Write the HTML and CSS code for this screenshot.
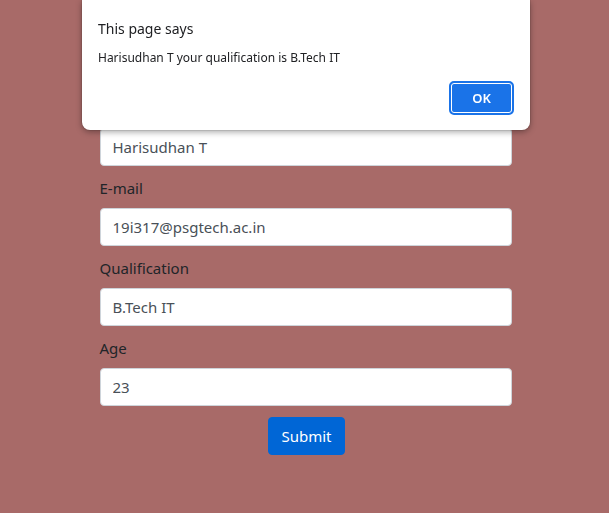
FILE: index.html
```html
<!DOCTYPE html>
<html lang="en">
<head>
<meta charset="utf-8">
<title>Form</title>
<link rel="stylesheet" href="styles.css">
</head>
<body>
<form class="form">
  <div class="field">
    <label class="label" for="name">Name</label>
    <input class="input" id="name" type="text" value="Harisudhan T">
  </div>
  <div class="field">
    <label class="label" for="email">E-mail</label>
    <input class="input" id="email" type="text" value="19i317@psgtech.ac.in">
  </div>
  <div class="field">
    <label class="label" for="qual">Qualification</label>
    <input class="input" id="qual" type="text" value="B.Tech IT">
  </div>
  <div class="field">
    <label class="label" for="age">Age</label>
    <input class="input" id="age" type="text" value="23">
  </div>
  <div class="actions">
    <button class="submit" type="button">Submit</button>
  </div>
</form>

<div class="dialog" role="alertdialog">
  <div class="dialog-title">This page says</div>
  <div class="dialog-msg">Harisudhan T your qualification is B.Tech IT</div>
  <div class="dialog-actions">
    <button class="ok" type="button">OK</button>
  </div>
</div>
</body>
</html>
```

FILE: styles.css
```css
html, body {
  margin: 0;
  padding: 0;
}
body {
  background: #a86a68;
  font-family: "Noto Sans", "Open Sans", sans-serif;
  color: #212529;
  width: 609px;
  height: 513px;
  overflow: hidden;
}
.form {
  width: 412px;
  margin: 0 auto;
  padding-top: 96px;
  transform: translateX(1px);
}
.field {
  display: flex;
  flex-direction: column;
  margin-bottom: 10px;
}
.label {
  font-size: 15px;
  line-height: 24px;
  margin-bottom: 8px;
}
.input {
  box-sizing: border-box;
  height: 38px;
  width: 100%;
  padding: 6px 12px;
  border: 1px solid #ced4da;
  border-radius: 4px;
  background: #fff;
  font-family: inherit;
  font-size: 15px;
  color: #495057;
  outline: none;
}
.actions {
  display: flex;
  justify-content: center;
  padding-top: 1px;
}
.submit {
  box-sizing: border-box;
  height: 38px;
  padding: 0 12px;
  border: 1px solid #0066d6;
  border-radius: 4px;
  background: #0066d6;
  color: #fff;
  font-family: inherit;
  font-size: 15px;
  transform: translateX(1px);
}
.dialog {
  position: fixed;
  left: 82px;
  top: 0;
  width: 448px;
  height: 130px;
  box-sizing: border-box;
  background: #fff;
  border-radius: 0 0 8px 8px;
  box-shadow: 0 2px 6px rgba(0, 0, 0, 0.35), 0 0 0 1px rgba(0, 0, 0, 0.08);
  padding: 19px 16px 0 16px;
  color: #202124;
}
.dialog-title {
  font-size: 14px;
  line-height: 20px;
}
.dialog-msg {
  font-size: 12px;
  line-height: 18px;
  margin-top: 10px;
}
.dialog-actions {
  display: flex;
  justify-content: flex-end;
  margin-top: 14px;
  padding-right: 0;
}
.ok {
  box-sizing: border-box;
  width: 65px;
  height: 34px;
  background: #1a73e8;
  color: #fff;
  border: 2px solid #1a73e8;
  box-shadow: inset 0 0 0 1px #fff;
  border-radius: 5px;
  font-family: inherit;
  font-size: 13px;
  font-weight: 600;
}
```
